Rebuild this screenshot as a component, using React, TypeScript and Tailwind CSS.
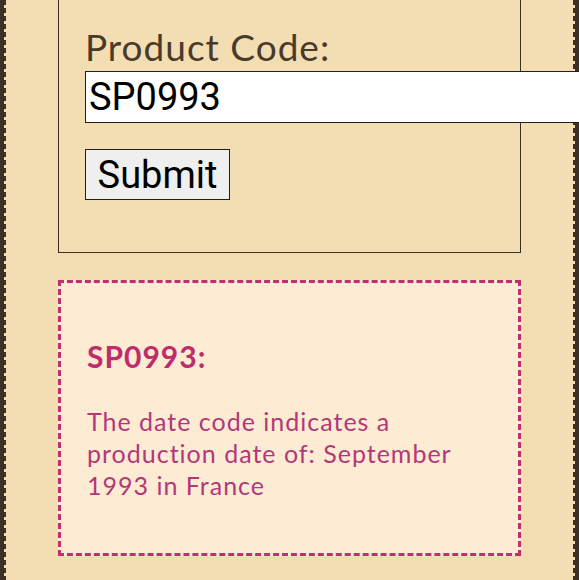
import React from 'react';

const teeth = 'w-[2px] bg-[repeating-linear-gradient(to_bottom,#3e2f25_0px,#3e2f25_5px,#f3deb4_5px,#f3deb4_8px)]';

function Edge() {
  return (
    <div className="flex w-[6px] shrink-0 self-stretch">
      <div className="w-[4px] bg-[#3e2f25]" />
      <div className={teeth} />
    </div>
  );
}

function EdgeRight() {
  return (
    <div className="flex w-[6px] shrink-0 self-stretch">
      <div className={teeth} />
      <div className="w-[4px] bg-[#3e2f25]" />
    </div>
  );
}

export default function App() {
  return (
    <div className="h-[580px] w-full overflow-hidden bg-[#f3deb4] flex font-['Lato',sans-serif]">
      <Edge />
      <div className="flex-1 min-w-0">
        {/* Lookup form */}
        <div className="mx-auto w-[463px] -mt-[20px] border border-[#3b2e22] pt-[44px] pb-[52px] pl-[26px]">
          <label className="block text-[37px] leading-[44px] tracking-[1px] text-[#4a3a2a]">Product Code:</label>
          <input
            type="text"
            defaultValue="SP0993"
            className="relative z-10 mt-[2px] block h-[52px] w-[520px] border border-[#1f1f1f] bg-white px-[3px] text-[38px] text-black font-['Roboto',sans-serif] outline-none"
          />
          <button className="mt-[26px] block h-[51px] w-[145px] border border-[#1f1f1f] bg-[#efefef] text-[38px] leading-none text-black font-['Roboto',sans-serif]">
            Submit
          </button>
        </div>

        {/* Result */}
        <div className="mx-auto mt-[27px] w-[463px] border-[3px] border-dashed border-[#c0306f] bg-[#fdebd3] px-[26px] pt-[55px] pb-[52px]">
          <h3 className="text-[30px] leading-[36px] tracking-[1px] font-bold text-[#bd2d6c]">SP0993:</h3>
          <p className="mt-[31px] text-[25px] leading-[32px] tracking-[1px] text-[#b2387a]">
            The date code indicates a production date of: September 1993 in France
          </p>
        </div>
      </div>
      <EdgeRight />
    </div>
  );
}
